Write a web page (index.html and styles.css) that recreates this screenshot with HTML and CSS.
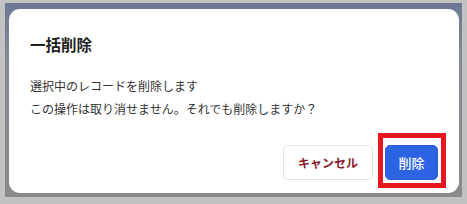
FILE: index.html
```html
<!DOCTYPE html>
<html lang="ja">
<head>
  <meta charset="UTF-8">
  <meta name="viewport" content="width=device-width, initial-scale=1.0">
  <title>一括削除</title>
  <link rel="stylesheet" href="styles.css">
</head>
<body>
  <div class="backdrop">
    <div class="dialog">
      <h2 class="dialog-title">一括削除</h2>
      <div class="dialog-body">
        <p>選択中のレコードを削除します</p>
        <p>この操作は取り消せません。それでも削除しますか？</p>
      </div>
      <div class="dialog-footer">
        <button class="btn btn-cancel">キャンセル</button>
        <button class="btn btn-delete">削除</button>
      </div>
    </div>
  </div>
</body>
</html>
```

FILE: styles.css
```css
html, body {
  margin: 0;
  height: 100%;
}

body {
  background: #c2c2c2;
  padding: 3px 5px 7px 5px;
  box-sizing: border-box;
  font-family: "Noto Sans CJK JP", "Noto Sans", sans-serif;
}

.backdrop {
  height: 100%;
  box-sizing: border-box;
  padding: 6px 3px 4px 4px;
  background: linear-gradient(180deg, #6c7894 0%, #858a93 30%, #8a8a8a 100%);
}

.dialog {
  height: 100%;
  box-sizing: border-box;
  background: #fff;
  border-radius: 11px;
  padding: 23px 21px 13px 21px;
  display: flex;
  flex-direction: column;
}

.dialog-title {
  margin: 0;
  font-size: 15.5px;
  line-height: 24px;
  font-weight: 700;
  color: #222;
}

.dialog-body {
  margin-top: 18px;
}

.dialog-body p {
  margin: 0;
  font-size: 12px;
  line-height: 23px;
  color: #333;
}

.dialog-footer {
  margin-top: auto;
  display: flex;
  justify-content: flex-end;
  gap: 12px;
}

.btn {
  font-family: inherit;
  font-weight: 700;
  height: 35px;
  border-radius: 5px;
  cursor: pointer;
}

.btn-cancel {
  width: 90px;
  font-size: 12px;
  background: #fff;
  border: 1px solid #e2e2e2;
  color: #8a1c2c;
}

.btn-delete {
  position: relative;
  width: 53px;
  font-size: 13px;
  background: #2d62e3;
  border: 1px solid #2a5bd6;
  color: #fff;
  font-weight: 500;
}

/* highlight frame around the delete button */
.btn-delete::after {
  content: "";
  position: absolute;
  top: -13px;
  left: -8px;
  right: -9px;
  bottom: -9px;
  border: 5px solid #e8161f;
  pointer-events: none;
}
```
